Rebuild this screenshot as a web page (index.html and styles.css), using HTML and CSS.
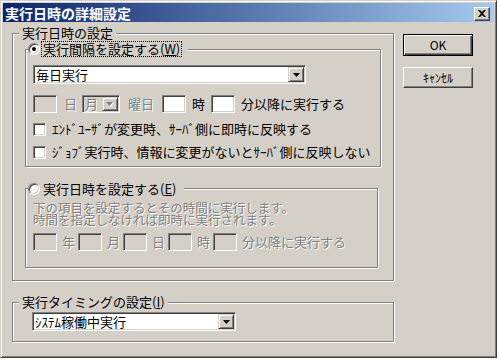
FILE: index.html
```html
<!DOCTYPE html>
<html lang="ja">
<head>
  <meta charset="UTF-8" />
  <title>実行日時の詳細設定</title>
  <link rel="stylesheet" href="styles.css">
</head>
<body>

  <div class="window">

    <div class="title-bar">
      <span class="title">実行日時の詳細設定</span>
      <span class="close-btn">
        <svg width="8" height="7" viewBox="0 0 8 7"><path d="M0 0H2L4 2L6 0H8L5 3.5L8 7H6L4 5L2 7H0L3 3.5Z" fill="#000"/></svg>
      </span>
    </div>

    <div class="dialog-body">

      <div class="left-col">

        <div class="group">
          <div class="group-title">実行日時の設定</div>

          <!-- interval -->
          <div class="sub-group interval">
            <div class="radio-title">
              <span class="radio checked"></span>
              <span class="focus">実行間隔を設定する(<u>W</u>)</span>
            </div>

            <div class="combo daily">
              <span class="combo-text">毎日実行</span>
              <span class="combo-btn"><svg width="7" height="4" viewBox="0 0 7 4"><path d="M0 0H7L3.5 4Z" fill="#000"/></svg></span>
            </div>

            <div class="field-row">
              <span class="edit disabled"></span>
              <span class="lbl off day-lbl">日</span>
              <span class="combo month disabled">
                <span class="combo-text">月</span>
                <span class="combo-btn"><svg width="8" height="5" viewBox="0 0 8 5"><path d="M1 1H8L4.5 5Z" fill="#fff"/><path d="M0 0H7L3.5 4Z" fill="#808080"/></svg></span>
              </span>
              <span class="lbl off week-lbl">曜日</span>
              <span class="edit hour-edit"></span>
              <span class="lbl hour-lbl">時</span>
              <span class="edit min-edit"></span>
              <span class="lbl min-lbl">分以降に実行する</span>
            </div>

            <div class="check-row first">
              <span class="checkbox"></span>
              <span>ｴﾝﾄﾞﾕｰｻﾞが変更時、ｻｰﾊﾞ側に即時に反映する</span>
            </div>
            <div class="check-row">
              <span class="checkbox"></span>
              <span>ｼﾞｮﾌﾞ実行時、情報に変更がないとｻｰﾊﾞ側に反映しない</span>
            </div>
          </div>

          <!-- fixed date -->
          <div class="sub-group datetime">
            <div class="radio-title">
              <span class="radio"></span>
              <span class="focus no-focus">実行日時を設定する(<u>E</u>)</span>
            </div>

            <div class="note off">
              下の項目を設定するとその時間に実行します。<br>
              時間を指定しなければ即時に実行されます。
            </div>

            <div class="field-row date-row">
              <span class="edit disabled"></span>
              <span class="lbl off">年</span>
              <span class="edit disabled"></span>
              <span class="lbl off">月</span>
              <span class="edit disabled"></span>
              <span class="lbl off">日</span>
              <span class="edit disabled"></span>
              <span class="lbl off">時</span>
              <span class="edit disabled"></span>
              <span class="lbl off">分以降に実行する</span>
            </div>
          </div>
        </div>

        <div class="group timing">
          <div class="group-title">実行タイミングの設定(<u>I</u>)</div>
          <div class="combo timing-combo">
            <span class="combo-text">ｼｽﾃﾑ稼働中実行</span>
            <span class="combo-btn"><svg width="7" height="4" viewBox="0 0 7 4"><path d="M0 0H7L3.5 4Z" fill="#000"/></svg></span>
          </div>
        </div>

      </div>

      <div class="buttons">
        <div class="btn default">OK</div>
        <div class="btn cancel">ｷｬﾝｾﾙ</div>
      </div>

    </div>
  </div>

</body>
</html>
```

FILE: styles.css
```css
body {
  margin: 0;
  background-color: #fff;
  color: #000;
  font-family: "Noto Sans CJK JP", "Noto Sans CJK SC", sans-serif;
  font-size: 13px;
  line-height: 14px;
}
.window {
  width: 497px;
  height: 358px;
  box-sizing: border-box;
  padding: 2px;
  background-color: #d4d0c8;
  border: 1px solid;
  border-color: #d4d0c8 #404040 #404040 #d4d0c8;
  box-shadow: inset 1px 1px #fff, inset -1px -1px #808080;
}
.title-bar {
  display: flex;
  align-items: center;
  justify-content: space-between;
  height: 19px;
  padding: 0 4px 0 2px;
  background: linear-gradient(to right, #0a246a, #a6caf0);
}
.title {
  color: #fff;
  font-weight: bold;
  font-size: 14px;
}
.close-btn {
  display: flex;
  align-items: center;
  justify-content: center;
  width: 16px;
  height: 14px;
  box-sizing: border-box;
  margin-top: 2px;
  background-color: #d4d0c8;
  border: 1px solid;
  border-color: #fff #404040 #404040 #fff;
  box-shadow: inset -1px -1px #808080;
}
.dialog-body {
  display: flex;
  align-items: flex-start;
  padding: 11px 0 0 9px;
}
.left-col {
  width: 382px;
}

/* group boxes (etched frame) */
.group, .sub-group {
  border: 1px solid #808080;
  box-shadow: inset 1px 1px #fff, 1px 1px #fff;
}
.group {
  padding: 0 12px 12px 12px;
}
.group-title {
  width: fit-content;
  margin: -8px 0 0 -6px;
  padding: 0 3px;
  background-color: #d4d0c8;
}
.sub-group {
  margin-top: 9px;
  padding: 0 7px 6px 7px;
}
.sub-group.datetime {
  margin-top: 21px;
  margin-right: 3px;
  padding-bottom: 16px;
}
.group.timing {
  margin-top: 21px;
  padding-bottom: 10px;
}
.radio-title {
  display: flex;
  align-items: center;
  width: fit-content;
  margin: -9px 0 0 -5px;
  padding-right: 6px;
  background-color: #d4d0c8;
}
.sub-group.datetime .radio-title {
  margin-top: -8px;
}
.radio {
  position: relative;
  width: 12px;
  height: 12px;
  box-sizing: border-box;
  margin-right: 1px;
  border-radius: 50%;
  background-color: #fff;
  border: 1px solid;
  border-color: #808080 #fff #fff #808080;
  box-shadow: inset 1px 1px #404040, inset -1px -1px #d4d0c8;
}
.radio.checked::after {
  content: "";
  position: absolute;
  left: 3px;
  top: 3px;
  width: 4px;
  height: 4px;
  border-radius: 50%;
  background-color: #000;
}
.focus {
  border: 1px dotted #000;
  padding: 0 1px;
}
.focus.no-focus {
  border-color: transparent;
}

/* inputs */
.edit, .combo, .checkbox {
  box-sizing: border-box;
  background-color: #fff;
  border: 1px solid;
  border-color: #808080 #fff #fff #808080;
  box-shadow: inset 1px 1px #404040, inset -1px -1px #d4d0c8;
}
.edit {
  width: 24px;
  height: 18px;
}
.edit.disabled, .combo.disabled {
  background-color: #d4d0c8;
}
.combo {
  display: flex;
  align-items: center;
  justify-content: space-between;
  height: 19px;
  padding: 1px 1px 1px 2px;
}
.combo.daily {
  width: 273px;
  margin-top: 8px;
}
.combo.month {
  width: 38px;
  height: 18px;
}
.combo.timing-combo {
  width: 204px;
  margin: 3px 0 0 7px;
}
.combo-text {
  white-space: nowrap;
}
.combo.disabled .combo-text {
  color: #808080;
  text-shadow: 1px 1px 0 #fff;
}
.combo-btn {
  display: flex;
  align-items: center;
  justify-content: center;
  width: 16px;
  height: 100%;
  box-sizing: border-box;
  background-color: #d4d0c8;
  border: 1px solid;
  border-color: #d4d0c8 #404040 #404040 #d4d0c8;
  box-shadow: inset 1px 1px #fff, inset -1px -1px #808080;
}

.field-row {
  display: flex;
  align-items: center;
  margin-top: 11px;
  white-space: nowrap;
}
.lbl {
  margin-left: 6px;
}
.day-lbl { margin-left: 7px; }
.combo.month { margin-left: 5px; }
.week-lbl { margin-left: 8px; }
.hour-edit { margin-left: 8px; }
.min-edit { margin-left: 6px; }
.off {
  color: #808080;
  text-shadow: 1px 1px 0 #fff;
}

.date-row {
  margin-top: 7px;
}
.date-row .lbl {
  margin-left: 5px;
}
.date-row .edit {
  margin-left: 3px;
}
.date-row .edit:first-child {
  margin-left: 0;
}

.check-row {
  display: flex;
  align-items: center;
  height: 16px;
  margin-top: 7px;
  white-space: nowrap;
}
.check-row.first {
  margin-top: 8px;
}
.checkbox {
  width: 13px;
  height: 13px;
  margin-right: 6px;
  flex-shrink: 0;
}

.note {
  margin-top: 5px;
  font-size: 12.5px;
  line-height: 12px;
  white-space: nowrap;
}

/* buttons */
.buttons {
  display: flex;
  flex-direction: column;
  margin: 1px 0 0 9px;
}
.btn {
  display: flex;
  align-items: center;
  justify-content: center;
  width: 70px;
  height: 21px;
  box-sizing: border-box;
  font-size: 12px;
  background-color: #d4d0c8;
  border: 1px solid;
  border-color: #fff #404040 #404040 #fff;
  box-shadow: inset -1px -1px #808080;
}
.btn.default {
  height: 22px;
  border-color: #000;
  box-shadow: inset 1px 1px #fff, inset -1px -1px #404040, inset -2px -2px #808080;
}
.btn.cancel {
  margin-top: 11px;
}
```
